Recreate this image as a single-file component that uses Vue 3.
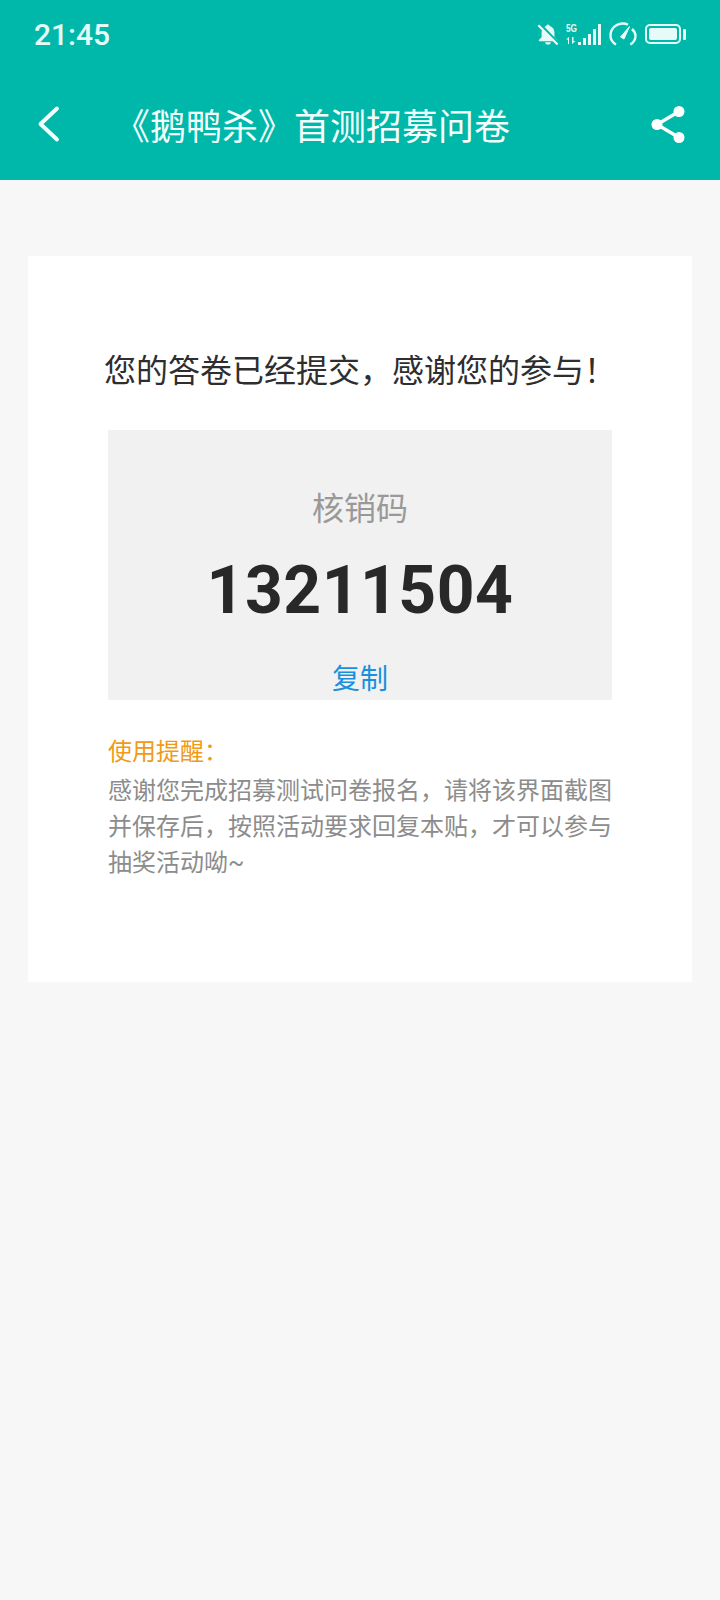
<template>
  <div class="page">
    <header class="top">
      <div class="status">
        <span class="time">21:45</span>
        <div class="status-icons">
          <svg class="ic-bell" width="22" height="22" viewBox="0 0 24 24">
            <path d="M12 1.500c-1.100 0-1.900.8-1.900 1.800C6.800 4.200 5 7 5 10.500v5L2 18.500v1.500h20v-1.500L19 15.500v-5c0-3.500-1.800-6.300-5.100-7.200 0-1-.8-1.800-1.900-1.800z" fill="#e6fbf8" />
            <path d="M9 21a3 2.500 0 0 0 6 0z" fill="#e6fbf8" />
            <path d="M3.500 1.500l20 21" stroke="#00b8a9" stroke-width="3" />
            <path d="M1.500 2.500l21 21" stroke="#e6fbf8" stroke-width="2.400" />
          </svg>
          <div class="net">
            <span class="net-txt">5G</span>
            <svg width="11" height="7" viewBox="0 0 11 7" fill="#e6fbf8">
              <path d="M2 7V2.500H0L3 0v7zM6 0v7l3.500-3H7.500V0z" />
            </svg>
          </div>
          <div class="bars">
            <i v-for="h in bars" :key="h" class="bar" :style="{ height: h + 'px' }"></i>
          </div>
          <svg class="ic-gauge" width="28" height="24" viewBox="0 0 28 24" fill="none" stroke="#e6fbf8" stroke-width="2.400">
            <path d="M7 22.500C3.500 20.500 1.500 17 1.500 13.500 1.500 6.700 7 1.500 14 1.500c2 0 3.500.4 5 1.200" />
            <path d="M23 7c2.200 2 3.500 4.300 3.500 7 0 3.500-2 6.500-5.200 8.500" />
            <path d="M11.500 15L20.500 4.500 15 17z" fill="#e6fbf8" stroke-width="1" />
          </svg>
          <div class="battery">
            <div class="battery-body"><div class="battery-fill"></div></div>
            <div class="battery-cap"></div>
          </div>
        </div>
      </div>
      <div class="toolbar">
        <svg class="back" width="26" height="38" viewBox="0 0 26 38" fill="none" stroke="#f2fffd" stroke-width="4" stroke-linecap="round" stroke-linejoin="round">
          <path d="M20 3.500L3.500 19 20 34.500" />
        </svg>
        <h1 class="title">《鹅鸭杀》首测招募问卷</h1>
        <svg class="share" width="36" height="38" viewBox="0 0 36 38" fill="#fff" stroke="#fff">
          <path d="M29 6.500L7 19.500l22 13" fill="none" stroke-width="3.400" />
          <circle cx="29" cy="6.500" r="5.500" stroke="none" />
          <circle cx="7" cy="19.500" r="5.500" stroke="none" />
          <circle cx="29" cy="32.500" r="5.500" stroke="none" />
        </svg>
      </div>
    </header>

    <main class="content">
      <section class="card">
        <p class="done">您的答卷已经提交，感谢您的参与！</p>
        <div class="code-box">
          <div class="code-label">核销码</div>
          <div class="code">{{ code }}</div>
          <div class="copy">复制</div>
        </div>
        <div class="tip">
          <div class="tip-title">使用提醒：</div>
          <p class="tip-text">感谢您完成招募测试问卷报名，请将该界面截图并保存后，按照活动要求回复本贴，才可以参与抽奖活动呦~</p>
        </div>
      </section>
    </main>
  </div>
</template>

<script setup>
const code = "13211504";
const bars = [3, 7, 11, 16, 21];
</script>

<style>
body {
  background: #f7f7f7;
}
</style>

<style scoped>
.page {
  width: 720px;
  min-height: 1600px;
  background: #f7f7f7;
  font-family: Roboto, "Noto Sans CJK SC", sans-serif;
}
.top {
  height: 180px;
  background: #00b8a9;
  color: #fff;
}
.status {
  height: 68px;
  display: flex;
  align-items: center;
  justify-content: space-between;
  padding: 0 34px;
}
.time {
  font-size: 30px;
  font-weight: 500;
  color: #e6fbf8;
}
.status-icons {
  display: flex;
  align-items: center;
}
.ic-bell {
  margin-right: 7px;
}
.net {
  width: 11px;
  display: flex;
  flex-direction: column;
  gap: 4px;
  margin-right: 1px;
}
.net-txt {
  font-size: 11px;
  line-height: 9px;
  font-weight: 700;
  white-space: nowrap;
  transform: scaleX(0.75);
  transform-origin: left center;
  color: #e6fbf8;
  font-family: "Liberation Sans", sans-serif;
}
.bars {
  display: flex;
  align-items: flex-end;
  gap: 2px;
  height: 22px;
  margin-right: 8px;
}
.bar {
  width: 3px;
  background: #e6fbf8;
}
.ic-gauge {
  margin-right: 8px;
}
.battery {
  display: flex;
  align-items: center;
}
.battery-body {
  width: 36px;
  height: 20px;
  border: 2px solid #e6fbf8;
  border-radius: 5px;
  padding: 2px;
  box-sizing: border-box;
}
.battery-fill {
  height: 100%;
  background: #e6fbf8;
  border-radius: 2px;
}
.battery-cap {
  width: 3px;
  height: 11px;
  margin-left: 2px;
  background: #e6fbf8;
  border-radius: 1px;
}
.toolbar {
  height: 112px;
  display: flex;
  align-items: center;
  padding: 0 34px 0 37px;
  box-sizing: border-box;
}
.back {
  flex: none;
}
.title {
  flex: 1;
  margin: 0 0 0 51px;
  font-size: 36px;
  font-weight: 400;
  color: #f4fffd;
  white-space: nowrap;
}
.share {
  flex: none;
}
.content {
  padding: 76px 28px 0;
}
.card {
  height: 726px;
  background: #fff;
  padding: 92px 80px 0 76px;
  box-sizing: border-box;
}
.done {
  margin: 0;
  font-size: 32px;
  line-height: 46px;
  color: #2e2e2e;
  white-space: nowrap;
}
.code-box {
  margin: 36px 0 0 4px;
  height: 270px;
  background: #f1f1f1;
  display: flex;
  flex-direction: column;
  align-items: center;
  overflow: hidden;
}
.code-label {
  margin-top: 56px;
  font-size: 32px;
  line-height: 46px;
  color: #999;
}
.code {
  margin-top: 21px;
  font-size: 66px;
  line-height: 76px;
  font-weight: 700;
  letter-spacing: 0.5px;
  color: #282828;
}
.copy {
  margin-top: 31px;
  font-size: 28px;
  line-height: 40px;
  color: #1a90dc;
}
.tip {
  margin: 34px 0 0 4px;
}
.tip-title {
  font-size: 24px;
  line-height: 36px;
  color: #f09a17;
}
.tip-text {
  margin: 3px 0 0;
  font-size: 24px;
  line-height: 36px;
  color: #8c8c8c;
}
</style>
